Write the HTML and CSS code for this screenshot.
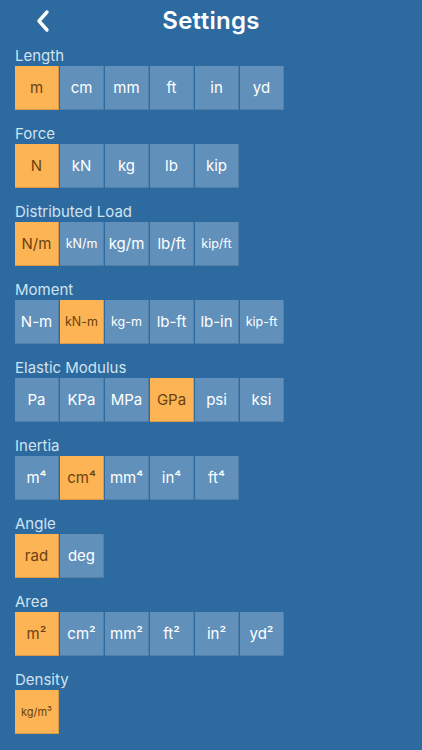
FILE: index.html
```html
<!DOCTYPE html>
<html>
<head>
<meta charset="utf-8">
<link rel="stylesheet" href="styles.css">
</head>
<body>
<div class="app">
  <header class="nav">
    <span class="back"><svg width="16" height="24" viewBox="0 0 16 24"><path d="M12 3 L4 12 L12 21" fill="none" stroke="#fff" stroke-width="3.4" stroke-linecap="round" stroke-linejoin="round"/></svg></span>
    <h1>Settings</h1>
  </header>
  <section class="group"><div class="label">Length</div>
    <div class="row"><span class="btn on">m</span><span class="btn">cm</span><span class="btn">mm</span><span class="btn">ft</span><span class="btn">in</span><span class="btn">yd</span></div></section>
  <section class="group"><div class="label">Force</div>
    <div class="row"><span class="btn on">N</span><span class="btn">kN</span><span class="btn">kg</span><span class="btn">lb</span><span class="btn">kip</span></div></section>
  <section class="group"><div class="label">Distributed Load</div>
    <div class="row"><span class="btn on">N/m</span><span class="btn sm">kN/m</span><span class="btn">kg/m</span><span class="btn">lb/ft</span><span class="btn sm">kip/ft</span></div></section>
  <section class="group"><div class="label">Moment</div>
    <div class="row"><span class="btn">N-m</span><span class="btn on sm">kN-m</span><span class="btn sm">kg-m</span><span class="btn">lb-ft</span><span class="btn">lb-in</span><span class="btn sm">kip-ft</span></div></section>
  <section class="group"><div class="label">Elastic Modulus</div>
    <div class="row"><span class="btn">Pa</span><span class="btn">KPa</span><span class="btn">MPa</span><span class="btn on">GPa</span><span class="btn">psi</span><span class="btn">ksi</span></div></section>
  <section class="group"><div class="label">Inertia</div>
    <div class="row"><span class="btn">m⁴</span><span class="btn on">cm⁴</span><span class="btn">mm⁴</span><span class="btn">in⁴</span><span class="btn">ft⁴</span></div></section>
  <section class="group"><div class="label">Angle</div>
    <div class="row"><span class="btn on">rad</span><span class="btn">deg</span></div></section>
  <section class="group"><div class="label">Area</div>
    <div class="row"><span class="btn on">m²</span><span class="btn">cm²</span><span class="btn">mm²</span><span class="btn">ft²</span><span class="btn">in²</span><span class="btn">yd²</span></div></section>
  <section class="group"><div class="label">Density</div>
    <div class="row"><span class="btn on xs">kg/m³</span></div></section>
</div>
</body>
</html>
```
FILE: styles.css
```css
html, body {
  margin: 0;
  padding: 0;
  background: #2c6a9f;
}
body {
  font-family: "Inter", "Noto Sans", sans-serif;
  color: #fff;
  width: 422px;
  height: 750px;
  overflow: hidden;
}
.app {
  padding: 0 15px;
}
.nav {
  height: 46px;
  display: flex;
  align-items: center;
  justify-content: center;
  position: relative;
}
.nav h1 {
  margin: 0;
  font-size: 24px;
  font-weight: 600;
  letter-spacing: 0.3px;
  margin-top: -5px;
}
.back {
  position: absolute;
  left: 20px;
  top: 9px;
  display: flex;
}
.group {
  margin-bottom: 14px;
}
.label {
  height: 20px;
  line-height: 20px;
  font-size: 15px;
  color: #d2e2f0;
}
.row {
  display: flex;
  gap: 1px;
}
.btn {
  width: 44px;
  height: 44px;
  box-sizing: border-box;
  display: flex;
  align-items: center;
  justify-content: center;
  background: #6191bb;
  border-right: 1px solid #517fa9;
  border-bottom: 1px solid #517fa9;
  font-size: 15px;
  color: #fff;
}
.btn.sm {
  font-size: 12.5px;
}
.btn.xs {
  font-size: 11px;
}
.btn.on {
  background: #fdb455;
  color: #6b4210;
  border-color: #d89a4a;
}
```
